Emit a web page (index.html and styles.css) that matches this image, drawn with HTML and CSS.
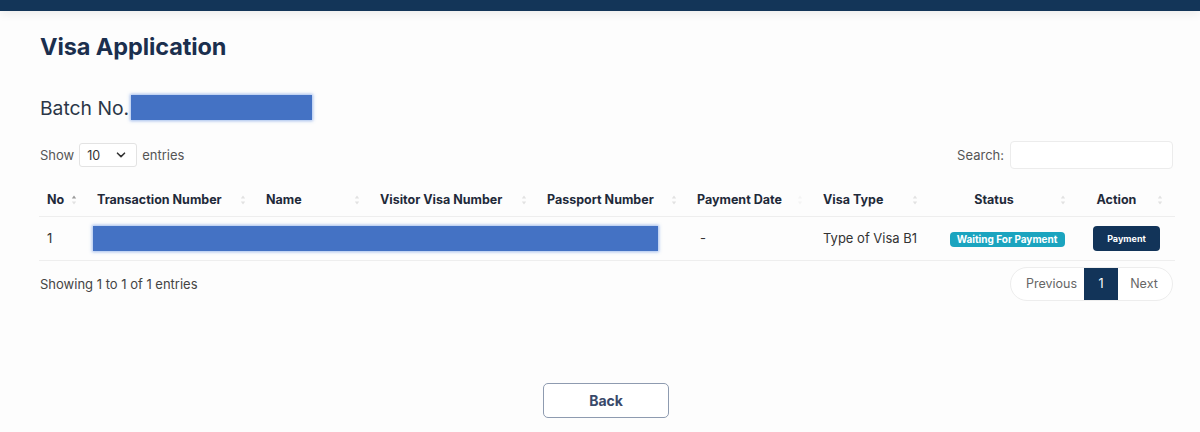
FILE: index.html
```html
<!DOCTYPE html>
<html lang="en">
<head>
<meta charset="utf-8">
<title>Visa Application</title>
<link rel="stylesheet" href="styles.css">
</head>
<body>
<header class="topbar"></header>
<main class="page">
  <h1 class="title">Visa Application</h1>
  <div class="batch">
    <span class="batch-label">Batch No.</span>
    <span class="redact batch-redact"></span>
  </div>

  <div class="controls">
    <div class="length">
      <span>Show</span>
      <span class="select">
        <span>10</span>
        <svg width="10" height="6" viewBox="0 0 10 6"><path d="M1.5 1.2 L5 4.6 L8.5 1.2" fill="none" stroke="#333" stroke-width="1.6" stroke-linecap="round" stroke-linejoin="round"/></svg>
      </span>
      <span>entries</span>
    </div>
    <div class="search">
      <span>Search:</span>
      <span class="search-input"></span>
    </div>
  </div>

  <table class="grid">
    <colgroup>
      <col class="c-no"><col class="c-trx"><col class="c-name"><col class="c-vvn"><col class="c-pass"><col class="c-pay"><col class="c-type"><col class="c-status"><col class="c-action">
    </colgroup>
    <thead>
      <tr>
        <th><span class="th-in">No<svg class="sort" width="6" height="10" viewBox="0 0 6 10"><path d="M3 0.5 L5.2 3.5 H0.8 Z" fill="#9a9a9a"/><path d="M3 9.5 L5.2 6.5 H0.8 Z" fill="#e2e2e2"/></svg></span></th>
        <th><span class="th-in">Transaction Number<svg class="sort" width="6" height="10" viewBox="0 0 6 10"><path d="M3 0.5 L5.2 3.5 H0.8 Z" fill="#e2e2e2"/><path d="M3 9.5 L5.2 6.5 H0.8 Z" fill="#e2e2e2"/></svg></span></th>
        <th><span class="th-in">Name<svg class="sort" width="6" height="10" viewBox="0 0 6 10"><path d="M3 0.5 L5.2 3.5 H0.8 Z" fill="#e2e2e2"/><path d="M3 9.5 L5.2 6.5 H0.8 Z" fill="#e2e2e2"/></svg></span></th>
        <th><span class="th-in">Visitor Visa Number<svg class="sort" width="6" height="10" viewBox="0 0 6 10"><path d="M3 0.5 L5.2 3.5 H0.8 Z" fill="#e2e2e2"/><path d="M3 9.5 L5.2 6.5 H0.8 Z" fill="#e2e2e2"/></svg></span></th>
        <th><span class="th-in">Passport Number<svg class="sort" width="6" height="10" viewBox="0 0 6 10"><path d="M3 0.5 L5.2 3.5 H0.8 Z" fill="#e2e2e2"/><path d="M3 9.5 L5.2 6.5 H0.8 Z" fill="#e2e2e2"/></svg></span></th>
        <th><span class="th-in">Payment Date<svg class="sort" width="6" height="10" viewBox="0 0 6 10"><path d="M3 0.5 L5.2 3.5 H0.8 Z" fill="#f4f4f4"/><path d="M3 9.5 L5.2 6.5 H0.8 Z" fill="#f4f4f4"/></svg></span></th>
        <th><span class="th-in">Visa Type<svg class="sort" width="6" height="10" viewBox="0 0 6 10"><path d="M3 0.5 L5.2 3.5 H0.8 Z" fill="#e2e2e2"/><path d="M3 9.5 L5.2 6.5 H0.8 Z" fill="#e2e2e2"/></svg></span></th>
        <th class="center"><span class="th-in">Status<svg class="sort" width="6" height="10" viewBox="0 0 6 10"><path d="M3 0.5 L5.2 3.5 H0.8 Z" fill="#e2e2e2"/><path d="M3 9.5 L5.2 6.5 H0.8 Z" fill="#e2e2e2"/></svg></span></th>
        <th class="center"><span class="th-in">Action<svg class="sort" width="6" height="10" viewBox="0 0 6 10"><path d="M3 0.5 L5.2 3.5 H0.8 Z" fill="#e2e2e2"/><path d="M3 9.5 L5.2 6.5 H0.8 Z" fill="#e2e2e2"/></svg></span></th>
      </tr>
    </thead>
    <tbody>
      <tr>
        <td>1</td>
        <td colspan="4"><span class="redact row-redact"></span></td>
        <td class="pay-date">-</td>
        <td>Type of Visa B1</td>
        <td class="center"><span class="badge">Waiting For Payment</span></td>
        <td class="center"><button class="pay-btn">Payment</button></td>
      </tr>
    </tbody>
  </table>

  <div class="footer-row">
    <span class="info">Showing 1 to 1 of 1 entries</span>
    <nav class="pager">
      <span class="pg">Previous</span>
      <span class="pg active">1</span>
      <span class="pg">Next</span>
    </nav>
  </div>

  <div class="back-wrap">
    <button class="back">Back</button>
  </div>
</main>
</body>
</html>
```

FILE: styles.css
```css
* { box-sizing: border-box; }
html, body { margin: 0; padding: 0; background: #fdfdfd; }
body {
  font-family: Inter, "Noto Sans", "Liberation Sans", sans-serif;
  color: #333;
  width: 1200px;
  height: 432px;
  overflow: hidden;
}
.topbar {
  height: 11px;
  background: #133558;
  box-shadow: 0 3px 10px rgba(0, 0, 0, 0.07);
}
.page {
  padding: 0 27px 0 39px;
}
.title {
  margin: 22px 0 0 1px;
  font-size: 23.5px;
  line-height: 28px;
  font-weight: 700;
  color: #1b2f4e;
  letter-spacing: -0.1px;
}
.batch {
  display: flex;
  align-items: center;
  margin-top: 34px;
  height: 25px;
}
.batch-label {
  margin-left: 1px;
  font-size: 19.3px;
  color: #2b3647;
}
.redact {
  display: block;
  background: #4472c4;
  box-shadow: 0 0 3px 1px rgba(120, 160, 230, 0.7);
}
.batch-redact {
  width: 181px;
  height: 25px;
  margin-left: 2px;
}
.controls {
  display: flex;
  justify-content: space-between;
  align-items: center;
  margin-top: 21px;
  height: 28px;
  font-size: 13px;
  color: #555;
}
.length {
  display: flex;
  align-items: center;
  gap: 5px;
  margin-left: 1px;
}
.select {
  display: inline-flex;
  align-items: center;
  justify-content: space-between;
  width: 58px;
  height: 24px;
  padding: 0 10px 0 7px;
  border: 1px solid #e3e3e3;
  border-radius: 3px;
  background: #fff;
  color: #333;
  font-size: 12.5px;
}
.search {
  display: flex;
  align-items: center;
  gap: 6px;
}
.search-input {
  display: block;
  width: 163px;
  height: 28px;
  border: 1px solid #ececec;
  border-radius: 4px;
  background: #fff;
}
.grid {
  margin-top: 15px;
  width: 1136px;
  border-collapse: collapse;
  table-layout: fixed;
  font-size: 13px;
}
.c-no { width: 50px; }
.c-trx { width: 169px; }
.c-name { width: 114px; }
.c-vvn { width: 167px; }
.c-pass { width: 150px; }
.c-pay { width: 126px; }
.c-type { width: 115px; }
.c-status { width: 148px; }
.c-action { width: 97px; }
.grid th {
  height: 32px;
  padding: 0 8px;
  text-align: left;
  font-weight: 700;
  font-size: 12.5px;
  color: #1f2a3a;
  border-bottom: 1px solid #eeeeee;
  white-space: nowrap;
}
.th-in {
  display: block;
  position: relative;
  padding-right: 20px;
}
.sort {
  position: absolute;
  right: 4px;
  top: 50%;
  margin-top: -5px;
}
.grid th.center .th-in { text-align: center; }
.grid td {
  height: 44px;
  padding: 0 8px;
  border-bottom: 1px solid #eeeeee;
  color: #333;
  white-space: nowrap;
}
.grid td.center { text-align: center; }
.grid td.pay-date { padding-left: 11px; }
.row-redact {
  width: 565px;
  height: 25px;
  margin-left: -4px;
}
.badge {
  display: inline-block;
  width: 115px;
  height: 15px;
  line-height: 15px;
  background: #1ba4bf;
  color: #fff;
  font-size: 10px;
  font-weight: 700;
  border-radius: 4px;
  text-align: center;
  margin-left: 6px;
}
.pay-btn {
  width: 67px;
  height: 25px;
  border: 0;
  border-radius: 4px;
  background: #123459;
  color: #fff;
  font-family: inherit;
  font-size: 9px;
  font-weight: 700;
  margin-left: 0;
  padding: 0;
}
.footer-row {
  display: flex;
  justify-content: space-between;
  align-items: center;
  margin-top: 6px;
  height: 34px;
}
.info {
  margin-left: 1px;
  font-size: 13px;
  color: #444;
}
.pager {
  display: flex;
  align-items: stretch;
  height: 34px;
  border: 1px solid #ededed;
  border-radius: 17px;
  background: #fff;
  font-size: 12.5px;
  color: #666;
  overflow: hidden;
}
.pg {
  display: flex;
  align-items: center;
  justify-content: center;
  padding: 0 12px;
}
.pg:first-child { width: 73px; padding-left: 16px; padding-right: 8px; }
.pg:last-child { width: 54px; padding-right: 14px; padding-left: 12px; }
.pg.active {
  width: 34px;
  padding: 0;
  background: #123459;
  color: #fff;
}
.back-wrap {
  display: flex;
  justify-content: center;
  margin-top: 82px;
}
.back {
  width: 126px;
  height: 35px;
  border: 1.5px solid #8e9bb0;
  border-radius: 5px;
  background: #fff;
  color: #39496a;
  font-family: inherit;
  font-size: 14px;
  font-weight: 700;
}
```
